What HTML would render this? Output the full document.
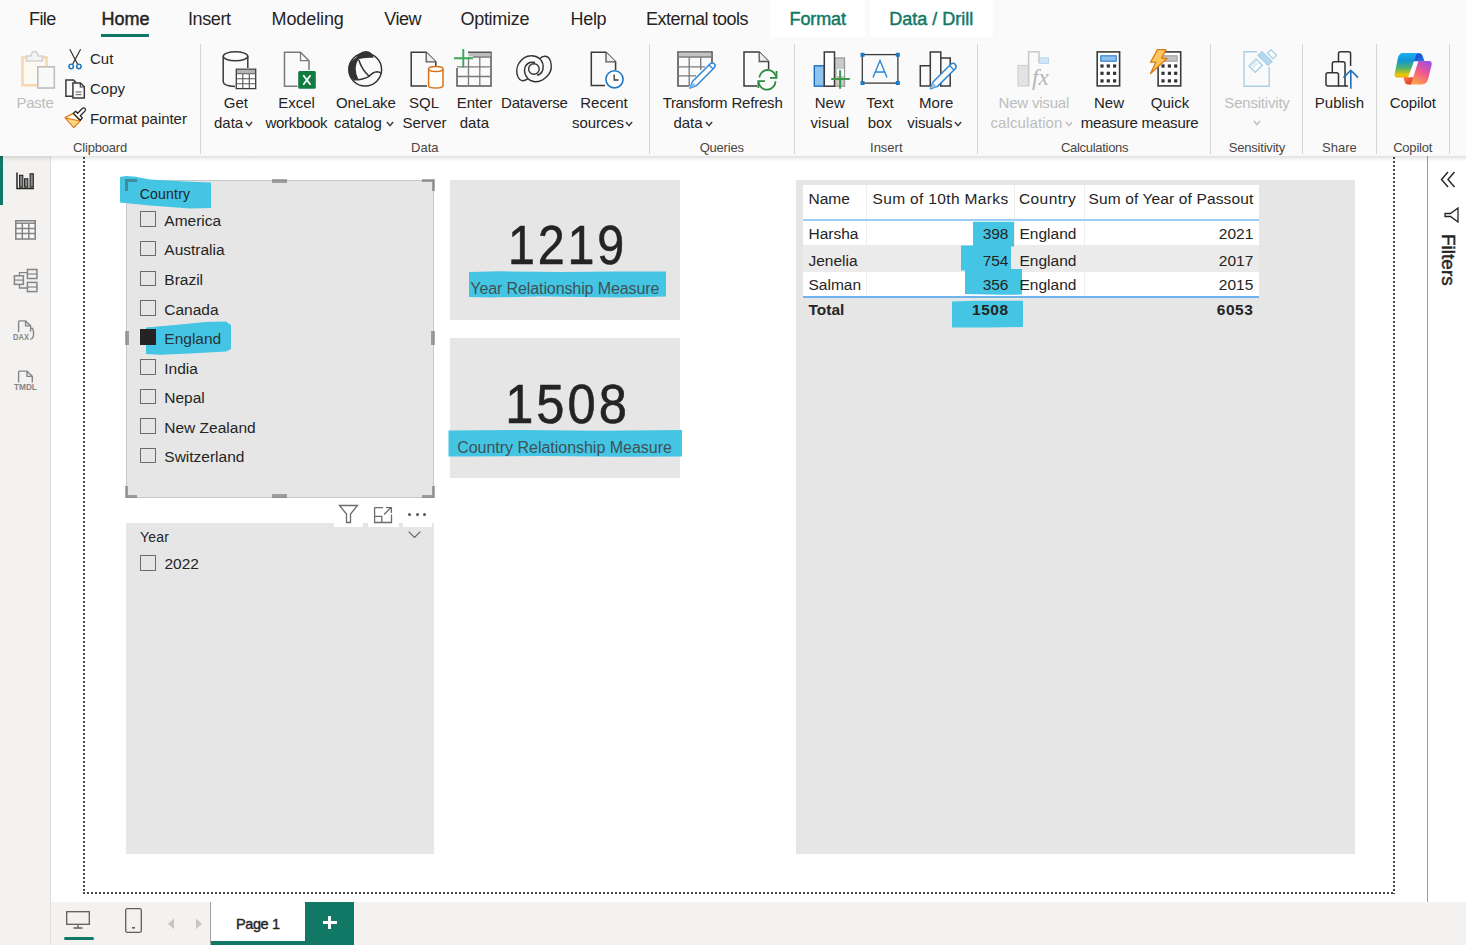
<!DOCTYPE html>
<html><head><meta charset="utf-8"><style>
html,body{margin:0;padding:0;}
body{width:1466px;height:945px;overflow:hidden;position:relative;background:#fff;font-family:"Liberation Sans",sans-serif;}
.t{position:absolute;white-space:nowrap;}
.r{position:absolute;display:block;}
</style></head><body>
<div class="r" style="left:0px;top:0px;width:1466px;height:156px;background:#fafafa;"></div>
<div class="r" style="left:770px;top:0px;width:95px;height:37px;background:#ffffff;"></div>
<div class="r" style="left:870px;top:0px;width:123px;height:37px;background:#ffffff;"></div>
<div class="r" style="left:51px;top:156px;width:1376px;height:746px;background:#ffffff;"></div>
<div class="r" style="left:0px;top:156px;width:50px;height:789px;background:#f3f2f1;"></div>
<div class="r" style="left:50px;top:156px;width:1px;height:789px;background:#e1dfdd;"></div>
<div class="r" style="left:0px;top:156px;width:3px;height:49px;background:#117865;"></div>
<div class="r" style="left:1427px;top:156px;width:1px;height:746px;background:#a19f9d;"></div>
<div class="r" style="left:1428px;top:156px;width:38px;height:746px;background:#ffffff;"></div>
<div class="r" style="left:51px;top:902px;width:1415px;height:43px;background:#f3f2f1;"></div>
<div class="r" style="left:0px;top:156px;width:1466px;height:6px;background:linear-gradient(rgba(0,0,0,0.12),rgba(0,0,0,0.03) 60%,rgba(0,0,0,0));z-index:5"></div>
<div class="r" style="left:101px;top:34px;width:48px;height:3px;background:#117865;"></div>
<div class="r" style="left:200px;top:44px;width:1px;height:110px;background:#d6d6d6;"></div>
<svg class="r" style="left:245.3px;top:121px;" width="8" height="6" viewBox="0 0 8 6"><path d="M0.9 1 L4.0 4.6 L7.1 1" fill="none" stroke="#3b3a39" stroke-width="1.4"/></svg>
<svg class="r" style="left:385.5px;top:121px;" width="8" height="6" viewBox="0 0 8 6"><path d="M0.9 1 L4.0 4.6 L7.1 1" fill="none" stroke="#3b3a39" stroke-width="1.4"/></svg>
<svg class="r" style="left:624.5px;top:121px;" width="8" height="6" viewBox="0 0 8 6"><path d="M0.9 1 L4.0 4.6 L7.1 1" fill="none" stroke="#3b3a39" stroke-width="1.4"/></svg>
<div class="r" style="left:649px;top:44px;width:1px;height:110px;background:#d6d6d6;"></div>
<svg class="r" style="left:705.3px;top:121px;" width="8" height="6" viewBox="0 0 8 6"><path d="M0.9 1 L4.0 4.6 L7.1 1" fill="none" stroke="#3b3a39" stroke-width="1.4"/></svg>
<div class="r" style="left:794px;top:44px;width:1px;height:110px;background:#d6d6d6;"></div>
<svg class="r" style="left:953.5px;top:121px;" width="8" height="6" viewBox="0 0 8 6"><path d="M0.9 1 L4.0 4.6 L7.1 1" fill="none" stroke="#3b3a39" stroke-width="1.4"/></svg>
<div class="r" style="left:977px;top:44px;width:1px;height:110px;background:#d6d6d6;"></div>
<svg class="r" style="left:1064.5px;top:121px;" width="8" height="6" viewBox="0 0 8 6"><path d="M0.9 1 L4.0 4.6 L7.1 1" fill="none" stroke="#bdbdbd" stroke-width="1.4"/></svg>
<div class="r" style="left:1210px;top:44px;width:1px;height:110px;background:#d6d6d6;"></div>
<svg class="r" style="left:1252.5px;top:120px;" width="8" height="6" viewBox="0 0 8 6"><path d="M0.9 1 L4.0 4.6 L7.1 1" fill="none" stroke="#bdbdbd" stroke-width="1.4"/></svg>
<div class="r" style="left:1302px;top:44px;width:1px;height:110px;background:#d6d6d6;"></div>
<div class="r" style="left:1376px;top:44px;width:1px;height:110px;background:#d6d6d6;"></div>
<div class="r" style="left:1449px;top:44px;width:1px;height:110px;background:#d6d6d6;"></div>
<div class="r" style="left:83px;top:157px;width:2px;height:737px;background:repeating-linear-gradient(180deg,#4a4a4a 0,#4a4a4a 2px,transparent 2px,transparent 4px);"></div>
<div class="r" style="left:1393px;top:157px;width:2px;height:737px;background:repeating-linear-gradient(180deg,#4a4a4a 0,#4a4a4a 2px,transparent 2px,transparent 4px);"></div>
<div class="r" style="left:83px;top:892px;width:1312px;height:2px;background:repeating-linear-gradient(90deg,#4a4a4a 0,#4a4a4a 2px,transparent 2px,transparent 4px);"></div>
<div class="r" style="left:126px;top:180px;width:308px;height:318px;background:#e6e6e6;box-sizing:border-box;border:1px solid #c8c8c8;"></div>
<div class="r" style="left:126px;top:523px;width:308px;height:331px;background:#e6e6e6;"></div>
<div class="r" style="left:450px;top:180px;width:230px;height:140px;background:#e6e6e6;"></div>
<div class="r" style="left:450px;top:338px;width:230px;height:140px;background:#e6e6e6;"></div>
<div class="r" style="left:796px;top:180px;width:559px;height:674px;background:#e6e6e6;"></div>
<div class="r" style="left:139.5px;top:211.4px;width:16.0px;height:15.5px;background:transparent;box-sizing:border-box;border:1px solid #6b6b6b;"></div>
<div class="r" style="left:139.5px;top:240.9px;width:16.0px;height:15.499999999999972px;background:transparent;box-sizing:border-box;border:1px solid #6b6b6b;"></div>
<div class="r" style="left:139.5px;top:270.5px;width:16.0px;height:15.5px;background:transparent;box-sizing:border-box;border:1px solid #6b6b6b;"></div>
<div class="r" style="left:139.5px;top:300.3px;width:16.0px;height:15.5px;background:transparent;box-sizing:border-box;border:1px solid #6b6b6b;"></div>
<div class="r" style="left:139.5px;top:359.3px;width:16.0px;height:15.5px;background:transparent;box-sizing:border-box;border:1px solid #6b6b6b;"></div>
<div class="r" style="left:139.5px;top:388.8px;width:16.0px;height:15.5px;background:transparent;box-sizing:border-box;border:1px solid #6b6b6b;"></div>
<div class="r" style="left:139.5px;top:418.4px;width:16.0px;height:15.5px;background:transparent;box-sizing:border-box;border:1px solid #6b6b6b;"></div>
<div class="r" style="left:139.5px;top:447.9px;width:16.0px;height:15.5px;background:transparent;box-sizing:border-box;border:1px solid #6b6b6b;"></div>
<svg class="r" style="left:408px;top:531px;" width="13" height="8" viewBox="0 0 13 8"><path d="M0.7 0.7 L6.5 6.5 L12.3 0.7" fill="none" stroke="#605e5c" stroke-width="1.1"/></svg>
<div class="r" style="left:139.5px;top:555px;width:16.0px;height:15.5px;background:transparent;box-sizing:border-box;border:1px solid #6b6b6b;"></div>
<div class="r" style="left:334px;top:503px;width:29px;height:24px;background:#ffffff;"></div>
<div class="r" style="left:368px;top:503px;width:30.5px;height:24px;background:#ffffff;"></div>
<div class="r" style="left:403px;top:503px;width:29px;height:24px;background:#ffffff;"></div>
<svg class="r" style="left:338px;top:504px;" width="21" height="20" viewBox="0 0 21 20"><path d="M1.5 1.5 L19.5 1.5 L12.5 10 L12.5 18.5 L8.5 18.5 L8.5 10 Z" fill="none" stroke="#6b6b6b" stroke-width="1.3" stroke-linejoin="miter"/></svg>
<svg class="r" style="left:373px;top:506px;" width="20" height="18" viewBox="0 0 20 18"><path d="M1.6 1.6 H10 M1.6 1.6 V16.5 H18.5 V8.5 M1.6 10.3 H8.8 V16.5 M11 8.5 L18 1.6 M13 1.6 H18.4 V7" fill="none" stroke="#6b6b6b" stroke-width="1.3"/></svg>
<div class="r" style="left:408.0px;top:512.5px;width:3px;height:3px;border-radius:50%;background:#555"></div>
<div class="r" style="left:415.5px;top:512.5px;width:3px;height:3px;border-radius:50%;background:#555"></div>
<div class="r" style="left:423.0px;top:512.5px;width:3px;height:3px;border-radius:50%;background:#555"></div>
<div class="r" style="left:803px;top:185px;width:456px;height:34px;background:#ffffff;"></div>
<div class="r" style="left:803px;top:219px;width:456px;height:2px;background:#9ccbf3;"></div>
<div class="r" style="left:803px;top:221px;width:456px;height:24px;background:#ffffff;"></div>
<div class="r" style="left:803px;top:245px;width:456px;height:27px;background:#ebebeb;"></div>
<div class="r" style="left:803px;top:272px;width:456px;height:24px;background:#ffffff;"></div>
<div class="r" style="left:803px;top:296px;width:456px;height:2px;background:#6fb3ee;"></div>
<div class="r" style="left:866px;top:185px;width:1px;height:34px;background:#eeeeee;"></div>
<div class="r" style="left:866px;top:221px;width:1px;height:24px;background:#eeeeee;"></div>
<div class="r" style="left:866px;top:272px;width:1px;height:24px;background:#eeeeee;"></div>
<div class="r" style="left:1014px;top:185px;width:1px;height:34px;background:#eeeeee;"></div>
<div class="r" style="left:1014px;top:221px;width:1px;height:24px;background:#eeeeee;"></div>
<div class="r" style="left:1014px;top:272px;width:1px;height:24px;background:#eeeeee;"></div>
<div class="r" style="left:1084px;top:185px;width:1px;height:34px;background:#eeeeee;"></div>
<div class="r" style="left:1084px;top:221px;width:1px;height:24px;background:#eeeeee;"></div>
<div class="r" style="left:1084px;top:272px;width:1px;height:24px;background:#eeeeee;"></div>
<svg class="r" style="left:1440px;top:171px;" width="16" height="17" viewBox="0 0 16 17"><path d="M8 1 L1.5 8.5 L8 16 M14.5 1 L8 8.5 L14.5 16" fill="none" stroke="#252423" stroke-width="1.4"/></svg>
<svg class="r" style="left:1444px;top:207px;" width="15" height="16" viewBox="0 0 15 16"><path d="M14 1 L14 15 L6.5 9.5 L1 9.5 L1 6.5 L6.5 6.5 Z" fill="none" stroke="#252423" stroke-width="1.3" stroke-linejoin="miter"/></svg>
<div class="t" style="left:1439px;top:234px;font-size:19px;line-height:19px;font-weight:400;color:#252423;writing-mode:vertical-rl;letter-spacing:0px;-webkit-text-stroke:0.45px #252423;">Filters</div>
<div class="r" style="left:210px;top:902px;width:1px;height:43px;background:#a19f9d;"></div>
<div class="r" style="left:211px;top:902px;width:94px;height:43px;background:#ffffff;"></div>
<div class="r" style="left:211px;top:941px;width:94px;height:4px;background:#117865;"></div>
<div class="r" style="left:305px;top:902px;width:49px;height:43px;background:#117865;"></div>
<div class="r" style="left:322.5px;top:920.5px;width:14.0px;height:3.0px;background:#ffffff;"></div>
<div class="r" style="left:328px;top:915.5px;width:3px;height:13.5px;background:#ffffff;"></div>
<svg class="r" style="left:66px;top:911px;" width="24" height="18" viewBox="0 0 24 18"><rect x="0.7" y="0.7" width="22.6" height="12.6" fill="none" stroke="#605e5c" stroke-width="1.3"/><path d="M12 13.5 V16.5 M7.5 17 H16.5" stroke="#605e5c" stroke-width="1.3"/></svg>
<div class="r" style="left:64px;top:937px;width:30px;height:3px;background:#117865;border-radius:1.5px;"></div>
<svg class="r" style="left:125px;top:908px;" width="17" height="25" viewBox="0 0 17 25"><rect x="0.7" y="0.7" width="15.6" height="23.6" rx="1.5" fill="none" stroke="#605e5c" stroke-width="1.3"/><rect x="7" y="19" width="3" height="1.6" fill="#605e5c"/></svg>
<svg class="r" style="left:167px;top:917.5px;" width="8" height="12" viewBox="0 0 8 12"><path d="M7 0.5 L1 5.8 L7 11.2 Z" fill="#c8c6c4"/></svg>
<svg class="r" style="left:195px;top:917.5px;" width="8" height="12" viewBox="0 0 8 12"><path d="M1 0.5 L7 5.8 L1 11.2 Z" fill="#c8c6c4"/></svg>
<svg class="r" style="left:15px;top:171px;overflow:visible" width="21" height="20" viewBox="0 0 21 20"><path d="M2 1.5 V17.5 H19" fill="none" stroke="#252423" stroke-width="1.5"/><rect x="4.6" y="4.3" width="3.2" height="11.8" fill="#8a8a8a" stroke="#252423" stroke-width="1.1"/><rect x="9.6" y="7.8" width="3.2" height="8.3" fill="#8a8a8a" stroke="#252423" stroke-width="1.1"/><rect x="15.1" y="2.8" width="3.2" height="13.3" fill="#8a8a8a" stroke="#252423" stroke-width="1.1"/></svg>
<svg class="r" style="left:14px;top:219px;" width="23" height="22" viewBox="0 0 23 22"><rect x="1.8" y="1.8" width="19.4" height="18.2" fill="#f7f7f7" stroke="#858585" stroke-width="1.6"/><path d="M1.8 4.2 H21.2 M1.8 9.4 H21.2 M1.8 14.6 H21.2 M8.3 4.2 V20 M14.8 4.2 V20" stroke="#858585" stroke-width="1.5"/></svg>
<svg class="r" style="left:13px;top:268px;" width="25" height="25" viewBox="0 0 25 25"><rect x="1.4" y="7.8" width="9" height="8.6" fill="none" stroke="#858585" stroke-width="1.5"/><path d="M1.4 12.1 H10.4" stroke="#858585" stroke-width="1.2"/><rect x="14.4" y="1.5" width="9.5" height="9" fill="none" stroke="#858585" stroke-width="1.5"/><path d="M14.4 6 H23.9" stroke="#858585" stroke-width="1.2"/><rect x="14.4" y="14.4" width="9.5" height="9.2" fill="none" stroke="#858585" stroke-width="1.5"/><path d="M14.4 19 H23.9" stroke="#858585" stroke-width="1.2"/><path d="M6.5 7.8 V4.6 H14.4 M6.5 16.4 V20 H14.4" fill="none" stroke="#858585" stroke-width="1.3"/></svg>
<svg class="r" style="left:0;top:0" width="1466" height="945" viewBox="0 0 1466 945"><path d="M120,177 L126,176 L134,176.5 L150,179.5 L185,181.5 L211,182.5 L211,208 L190,208.5 L150,205.5 L125,203 L120,202.5 Z" fill="#44c5e4"/><path d="M146,327.5 L175,325 L205,322 L226,321.5 L231,325 L231,349 L226,351.5 L190,353.5 L160,354.8 L146,354 Z" fill="#44c5e4"/><path d="M469,272 L500,271.3 L560,272 L620,271.5 L666,271.5 L666,296.5 L620,297.5 L540,296.5 L490,297.5 L469,297 Z" fill="#44c5e4"/><path d="M448.5,430.5 L520,430 L600,430.8 L682,430 L682,456.5 L620,456.8 L540,456 L470,456.5 L448.5,456.5 Z" fill="#44c5e4"/><path d="M973,221.7 L1014,221.7 L1014,246.5 L973,246.5 Z" fill="#44c5e4"/><path d="M961,245.5 L1011,245.5 L1011,270.5 L961,270.5 Z" fill="#44c5e4"/><path d="M965,269 L1022,269 L1022,294.6 L1000,294.8 L965,294 Z" fill="#44c5e4"/><path d="M952,301.5 L975,300.8 L1023,300.8 L1023,327 L990,327.6 L952,327.6 Z" fill="#44c5e4"/></svg>
<svg class="r" style="left:0;top:0" width="1466" height="945" viewBox="0 0 1466 945"><path d="M125,179 L137,179 L137,182 L128,182 L128,191 L125,191 Z M422,179 L435,179 L435,191 L432,191 L432,182 L422,182 Z M125,486 L128,486 L128,495 L137,495 L137,498 L125,498 Z M432,486 L435,486 L435,498 L422,498 L422,495 L432,495 Z M272,179 L287,179 L287,183 L272,183 Z M272,494 L287,494 L287,498 L272,498 Z M125,331 L129,331 L129,345 L125,345 Z M431,331 L435,331 L435,345 L431,345 Z " fill="rgba(60,60,60,0.42)"/></svg>
<div class="t" style="top:9.76px;font-size:18px;line-height:18px;color:#252423;font-weight:400;letter-spacing:-0.6px;left:29.00px;">File</div>
<div class="t" style="top:9.76px;font-size:18px;line-height:18px;color:#252423;font-weight:400;left:101.50px;-webkit-text-stroke:0.45px #252423;">Home</div>
<div class="t" style="top:9.76px;font-size:18px;line-height:18px;color:#252423;font-weight:400;letter-spacing:-0.4px;left:188.00px;">Insert</div>
<div class="t" style="top:9.76px;font-size:18px;line-height:18px;color:#252423;font-weight:400;letter-spacing:-0.1px;left:271.50px;">Modeling</div>
<div class="t" style="top:9.76px;font-size:18px;line-height:18px;color:#252423;font-weight:400;letter-spacing:-0.5px;left:384.30px;">View</div>
<div class="t" style="top:9.76px;font-size:18px;line-height:18px;color:#252423;font-weight:400;letter-spacing:-0.3px;left:460.50px;">Optimize</div>
<div class="t" style="top:9.76px;font-size:18px;line-height:18px;color:#252423;font-weight:400;letter-spacing:-0.3px;left:570.50px;">Help</div>
<div class="t" style="top:9.76px;font-size:18px;line-height:18px;color:#252423;font-weight:400;letter-spacing:-0.5px;left:646.00px;">External tools</div>
<div class="t" style="top:9.76px;font-size:18px;line-height:18px;color:#117865;font-weight:400;letter-spacing:-0.1px;left:789.50px;-webkit-text-stroke:0.45px #117865;">Format</div>
<div class="t" style="top:9.76px;font-size:18px;line-height:18px;color:#117865;font-weight:400;left:889.30px;-webkit-text-stroke:0.45px #117865;">Data / Drill</div>
<div class="t" style="top:94.80px;font-size:15px;line-height:15px;color:#bdbdbd;font-weight:400;letter-spacing:-0.3px;left:-265.00px;width:600px;text-align:center;">Paste</div>
<div class="t" style="top:50.90px;font-size:15px;line-height:15px;color:#252423;font-weight:400;left:90.00px;">Cut</div>
<div class="t" style="top:80.50px;font-size:15px;line-height:15px;color:#252423;font-weight:400;left:90.00px;">Copy</div>
<div class="t" style="top:111.10px;font-size:15px;line-height:15px;color:#252423;font-weight:400;letter-spacing:-0.05px;left:90.00px;">Format painter</div>
<div class="t" style="top:140.50px;font-size:13px;line-height:13px;color:#484644;font-weight:400;letter-spacing:-0.2px;left:-200.00px;width:600px;text-align:center;">Clipboard</div>
<div class="t" style="top:94.80px;font-size:15px;line-height:15px;color:#252423;font-weight:400;left:-64.20px;width:600px;text-align:center;">Get</div>
<div class="t" style="top:114.80px;font-size:15px;line-height:15px;color:#252423;font-weight:400;left:214.00px;">data</div>
<div class="t" style="top:94.80px;font-size:15px;line-height:15px;color:#252423;font-weight:400;left:-3.50px;width:600px;text-align:center;">Excel</div>
<div class="t" style="top:114.80px;font-size:15px;line-height:15px;color:#252423;font-weight:400;letter-spacing:-0.3px;left:-3.70px;width:600px;text-align:center;">workbook</div>
<div class="t" style="top:94.80px;font-size:15px;line-height:15px;color:#252423;font-weight:400;letter-spacing:-0.2px;left:65.80px;width:600px;text-align:center;">OneLake</div>
<div class="t" style="top:114.80px;font-size:15px;line-height:15px;color:#252423;font-weight:400;letter-spacing:-0.1px;left:334.00px;">catalog</div>
<div class="t" style="top:94.80px;font-size:15px;line-height:15px;color:#252423;font-weight:400;left:124.00px;width:600px;text-align:center;">SQL</div>
<div class="t" style="top:114.80px;font-size:15px;line-height:15px;color:#252423;font-weight:400;left:124.50px;width:600px;text-align:center;">Server</div>
<div class="t" style="top:94.80px;font-size:15px;line-height:15px;color:#252423;font-weight:400;left:174.70px;width:600px;text-align:center;">Enter</div>
<div class="t" style="top:114.80px;font-size:15px;line-height:15px;color:#252423;font-weight:400;left:174.40px;width:600px;text-align:center;">data</div>
<div class="t" style="top:94.80px;font-size:15px;line-height:15px;color:#252423;font-weight:400;letter-spacing:-0.2px;left:234.40px;width:600px;text-align:center;">Dataverse</div>
<div class="t" style="top:94.80px;font-size:15px;line-height:15px;color:#252423;font-weight:400;left:304.00px;width:600px;text-align:center;">Recent</div>
<div class="t" style="top:114.80px;font-size:15px;line-height:15px;color:#252423;font-weight:400;letter-spacing:-0.1px;left:572.00px;">sources</div>
<div class="t" style="top:140.50px;font-size:13px;line-height:13px;color:#484644;font-weight:400;left:124.80px;width:600px;text-align:center;">Data</div>
<div class="t" style="top:94.80px;font-size:15px;line-height:15px;color:#252423;font-weight:400;letter-spacing:-0.4px;left:394.90px;width:600px;text-align:center;">Transform</div>
<div class="t" style="top:114.80px;font-size:15px;line-height:15px;color:#252423;font-weight:400;left:673.40px;">data</div>
<div class="t" style="top:94.80px;font-size:15px;line-height:15px;color:#252423;font-weight:400;letter-spacing:-0.2px;left:457.00px;width:600px;text-align:center;">Refresh</div>
<div class="t" style="top:140.50px;font-size:13px;line-height:13px;color:#484644;font-weight:400;letter-spacing:-0.2px;left:421.70px;width:600px;text-align:center;">Queries</div>
<div class="t" style="top:94.80px;font-size:15px;line-height:15px;color:#252423;font-weight:400;left:529.80px;width:600px;text-align:center;">New</div>
<div class="t" style="top:114.80px;font-size:15px;line-height:15px;color:#252423;font-weight:400;left:529.80px;width:600px;text-align:center;">visual</div>
<div class="t" style="top:94.80px;font-size:15px;line-height:15px;color:#252423;font-weight:400;left:580.00px;width:600px;text-align:center;">Text</div>
<div class="t" style="top:114.80px;font-size:15px;line-height:15px;color:#252423;font-weight:400;left:579.80px;width:600px;text-align:center;">box</div>
<div class="t" style="top:94.80px;font-size:15px;line-height:15px;color:#252423;font-weight:400;left:636.20px;width:600px;text-align:center;">More</div>
<div class="t" style="top:114.80px;font-size:15px;line-height:15px;color:#252423;font-weight:400;letter-spacing:-0.1px;left:907.30px;">visuals</div>
<div class="t" style="top:140.50px;font-size:13px;line-height:13px;color:#484644;font-weight:400;left:586.30px;width:600px;text-align:center;">Insert</div>
<div class="t" style="top:94.80px;font-size:15px;line-height:15px;color:#bdbdbd;font-weight:400;letter-spacing:-0.2px;left:733.80px;width:600px;text-align:center;">New visual</div>
<div class="t" style="top:114.80px;font-size:15px;line-height:15px;color:#bdbdbd;font-weight:400;letter-spacing:0.1px;left:990.50px;">calculation</div>
<div class="t" style="top:94.80px;font-size:15px;line-height:15px;color:#252423;font-weight:400;left:809.00px;width:600px;text-align:center;">New</div>
<div class="t" style="top:114.80px;font-size:15px;line-height:15px;color:#252423;font-weight:400;letter-spacing:-0.2px;left:809.20px;width:600px;text-align:center;">measure</div>
<div class="t" style="top:94.80px;font-size:15px;line-height:15px;color:#252423;font-weight:400;left:870.00px;width:600px;text-align:center;">Quick</div>
<div class="t" style="top:114.80px;font-size:15px;line-height:15px;color:#252423;font-weight:400;letter-spacing:-0.2px;left:870.00px;width:600px;text-align:center;">measure</div>
<div class="t" style="top:140.50px;font-size:13px;line-height:13px;color:#484644;font-weight:400;letter-spacing:-0.3px;left:794.60px;width:600px;text-align:center;">Calculations</div>
<div class="t" style="top:94.80px;font-size:15px;line-height:15px;color:#bdbdbd;font-weight:400;letter-spacing:-0.2px;left:957.00px;width:600px;text-align:center;">Sensitivity</div>
<div class="t" style="top:140.50px;font-size:13px;line-height:13px;color:#484644;font-weight:400;letter-spacing:-0.2px;left:956.90px;width:600px;text-align:center;">Sensitivity</div>
<div class="t" style="top:94.80px;font-size:15px;line-height:15px;color:#252423;font-weight:400;left:1039.40px;width:600px;text-align:center;">Publish</div>
<div class="t" style="top:140.50px;font-size:13px;line-height:13px;color:#484644;font-weight:400;left:1039.40px;width:600px;text-align:center;">Share</div>
<div class="t" style="top:94.80px;font-size:15px;line-height:15px;color:#252423;font-weight:400;letter-spacing:-0.1px;left:1112.80px;width:600px;text-align:center;">Copilot</div>
<div class="t" style="top:140.50px;font-size:13px;line-height:13px;color:#484644;font-weight:400;letter-spacing:-0.2px;left:1112.70px;width:600px;text-align:center;">Copilot</div>
<div class="t" style="top:187.15px;font-size:14px;line-height:14px;color:#252423;font-weight:400;left:139.80px;letter-spacing:0.2px;">Country</div>
<div class="t" style="top:212.78px;font-size:15.5px;line-height:15.5px;color:#252423;font-weight:400;left:164.30px;">America</div>
<div class="t" style="top:242.28px;font-size:15.5px;line-height:15.5px;color:#252423;font-weight:400;left:164.30px;">Australia</div>
<div class="t" style="top:271.88px;font-size:15.5px;line-height:15.5px;color:#252423;font-weight:400;left:164.30px;">Brazil</div>
<div class="t" style="top:301.68px;font-size:15.5px;line-height:15.5px;color:#252423;font-weight:400;left:164.30px;">Canada</div>
<div class="r" style="left:139.5px;top:329.4px;width:16px;height:15.5px;background:#252423"></div>
<div class="t" style="top:330.78px;font-size:15.5px;line-height:15.5px;color:#2a3436;font-weight:400;left:164.30px;">England</div>
<div class="t" style="top:360.68px;font-size:15.5px;line-height:15.5px;color:#252423;font-weight:400;left:164.30px;">India</div>
<div class="t" style="top:390.18px;font-size:15.5px;line-height:15.5px;color:#252423;font-weight:400;left:164.30px;">Nepal</div>
<div class="t" style="top:419.78px;font-size:15.5px;line-height:15.5px;color:#252423;font-weight:400;left:164.30px;">New Zealand</div>
<div class="t" style="top:449.28px;font-size:15.5px;line-height:15.5px;color:#252423;font-weight:400;left:164.30px;">Switzerland</div>
<div class="t" style="top:530.15px;font-size:14px;line-height:14px;color:#252423;font-weight:400;left:140.00px;letter-spacing:0.2px;">Year</div>
<div class="t" style="top:555.88px;font-size:15.5px;line-height:15.5px;color:#252423;font-weight:400;left:164.50px;">2022</div>
<div class="t" style="left:450px;top:218.44px;width:232px;font-size:55px;line-height:55px;color:#252423;text-align:center;letter-spacing:3.2px;text-indent:3.2px;transform:scaleX(0.88);transform-origin:50% 0;-webkit-text-stroke:0.6px #252423;">1219</div>
<div class="t" style="top:280.96px;font-size:16px;line-height:16px;color:#3e5256;font-weight:400;letter-spacing:-0.1px;left:264.80px;width:600px;text-align:center;">Year Relationship Measure</div>
<div class="t" style="left:450px;top:377.44px;width:232px;font-size:55px;line-height:55px;color:#252423;text-align:center;letter-spacing:3.3px;text-indent:3.3px;transform:scaleX(0.92);transform-origin:50% 0;-webkit-text-stroke:0.6px #252423;">1508</div>
<div class="t" style="top:440.46px;font-size:16px;line-height:16px;color:#3e5256;font-weight:400;letter-spacing:-0.02px;left:264.50px;width:600px;text-align:center;">Country Relationship Measure</div>
<div class="t" style="top:190.88px;font-size:15.5px;line-height:15.5px;color:#252423;font-weight:400;left:808.50px;">Name</div>
<div class="t" style="top:190.88px;font-size:15.5px;line-height:15.5px;color:#252423;font-weight:400;letter-spacing:0.35px;left:872.50px;">Sum of 10th Marks</div>
<div class="t" style="top:190.88px;font-size:15.5px;line-height:15.5px;color:#252423;font-weight:400;letter-spacing:0.4px;left:1019.00px;">Country</div>
<div class="t" style="top:190.88px;font-size:15.5px;line-height:15.5px;color:#252423;font-weight:400;letter-spacing:0.13px;left:1088.50px;">Sum of Year of Passout</div>
<div class="t" style="top:225.68px;font-size:15.5px;line-height:15.5px;color:#252423;font-weight:400;left:808.50px;">Harsha</div>
<div class="t" style="top:225.68px;font-size:15.5px;line-height:15.5px;color:#252423;font-weight:400;left:408.50px;width:600px;text-align:right;">398</div>
<div class="t" style="top:225.68px;font-size:15.5px;line-height:15.5px;color:#252423;font-weight:400;left:1019.50px;">England</div>
<div class="t" style="top:225.68px;font-size:15.5px;line-height:15.5px;color:#252423;font-weight:400;left:653.30px;width:600px;text-align:right;">2021</div>
<div class="t" style="top:252.58px;font-size:15.5px;line-height:15.5px;color:#252423;font-weight:400;left:808.50px;">Jenelia</div>
<div class="t" style="top:252.58px;font-size:15.5px;line-height:15.5px;color:#252423;font-weight:400;left:408.50px;width:600px;text-align:right;">754</div>
<div class="t" style="top:252.58px;font-size:15.5px;line-height:15.5px;color:#252423;font-weight:400;left:1019.50px;">England</div>
<div class="t" style="top:252.58px;font-size:15.5px;line-height:15.5px;color:#252423;font-weight:400;left:653.30px;width:600px;text-align:right;">2017</div>
<div class="t" style="top:277.38px;font-size:15.5px;line-height:15.5px;color:#252423;font-weight:400;left:808.50px;">Salman</div>
<div class="t" style="top:277.38px;font-size:15.5px;line-height:15.5px;color:#252423;font-weight:400;left:408.50px;width:600px;text-align:right;">356</div>
<div class="t" style="top:277.38px;font-size:15.5px;line-height:15.5px;color:#252423;font-weight:400;left:1019.50px;">England</div>
<div class="t" style="top:277.38px;font-size:15.5px;line-height:15.5px;color:#252423;font-weight:400;left:653.30px;width:600px;text-align:right;">2015</div>
<div class="t" style="top:302.08px;font-size:15.5px;line-height:15.5px;color:#252423;font-weight:700;left:808.50px;">Total</div>
<div class="t" style="top:302.08px;font-size:15.5px;line-height:15.5px;color:#252423;font-weight:700;letter-spacing:0.5px;left:408.50px;width:600px;text-align:right;">1508</div>
<div class="t" style="top:302.08px;font-size:15.5px;line-height:15.5px;color:#252423;font-weight:700;letter-spacing:0.5px;left:653.30px;width:600px;text-align:right;">6053</div>
<div class="t" style="top:917.33px;font-size:14.5px;line-height:14.5px;color:#252423;font-weight:400;letter-spacing:-0.35px;left:-42.20px;width:600px;text-align:center;-webkit-text-stroke:0.4px #252423;">Page 1</div>
<svg class="r" style="left:0;top:300px" width="50" height="100" viewBox="0 300 50 100"><g fill="none" stroke="#858585" stroke-width="1.4"><path d="M18.6 332 V322 Q18.6 320.9 19.7 320.9 H25.6 L30.6 325.9 V331.5 M25.6 320.9 V325.9 H30.6 M31.6 328 Q33.6 329 33.6 333.5 Q33.6 338.6 30.3 339.4"/><path d="M18.6 382.4 V372.2 Q18.6 371.1 19.7 371.1 H27 L32.3 376.4 V382.4 M27 371.1 V376.4 H32.3"/></g><g fill="#858585" font-family="Liberation Sans" font-weight="700"><text x="13.1" y="340.4" font-size="8.4" textLength="15.9" lengthAdjust="spacingAndGlyphs">DAX</text><text x="14" y="390.2" font-size="8.6" textLength="22.9" lengthAdjust="spacingAndGlyphs">TMDL</text></g></svg>
<svg class="r" style="left:0;top:0" width="1466" height="160" viewBox="0 0 1466 160"><rect x="22.5" y="57.3" width="24" height="28" fill="#fdfaf4" stroke="#f6d9b2" stroke-width="2.6"/><path d="M26.5 61 V56 H31 Q31.5 51.5 34.5 51.5 Q37.5 51.5 38 56 H42.5 V61 Z" fill="#f4f4f4" stroke="#d2d2d2" stroke-width="1.6"/><rect x="37.8" y="66.8" width="16.5" height="21.2" fill="#f9f9f9" stroke="#bdbdbd" stroke-width="1.6"/><path d="M69.8 49.3 L77.6 64.3 M80.6 49.3 L72.6 64.3" stroke="#333" stroke-width="1.2" fill="none"/><circle cx="71.2" cy="66.5" r="2.2" fill="#fff" stroke="#1f78c1" stroke-width="1.5"/><circle cx="78.9" cy="66.5" r="2.2" fill="#fff" stroke="#1f78c1" stroke-width="1.5"/><path d="M75.5 96.2 H65.9 V79.9 H73.5 L76 82.5" fill="#fafafa" stroke="#3b3a39" stroke-width="1.5"/><path d="M72.9 83 H80.5 L84.3 86.8 V98 H72.9 Z" fill="#fafafa" stroke="#3b3a39" stroke-width="1.5" stroke-linejoin="miter"/><path d="M80.3 83 V87 H84.3" fill="none" stroke="#3b3a39" stroke-width="1.2"/><path d="M75.6 92 H81.5 M75.6 94.7 H81.5" stroke="#555" stroke-width="1"/><path d="M65.1 117.6 L73.3 113.4 L80.3 120.7 L73.65 127.4 Z" fill="#fff" stroke="#e07b14" stroke-width="1.4" stroke-linejoin="round"/><path d="M67 118.4 L79 120.9 L73.7 126.2 Z" fill="#f9d77e"/><path d="M65.5 117.8 L79.8 121" stroke="#e07b14" stroke-width="1.2"/><path d="M73.3 113.4 L75.6 111.2 L77.6 113.2 L82.3 108.5 Q83.8 107.2 85 108.4 Q86.2 109.7 84.9 111.1 L80.3 115.8 L82.4 117.9 L80.3 120.2 Z" fill="#fff" stroke="#252423" stroke-width="1.3" stroke-linejoin="round"/><path d="M223.2 56.3 V81.5 Q223.2 86 235 86.5" fill="none" stroke="#3b3a39" stroke-width="1.5"/><path d="M247.8 56.3 V68" fill="none" stroke="#3b3a39" stroke-width="1.5"/><ellipse cx="235.5" cy="56.3" rx="12.3" ry="4.5" fill="#fafafa" stroke="#3b3a39" stroke-width="1.5"/><rect x="236.3" y="69.2" width="19.4" height="19.4" fill="#fff" stroke="#3b3a39" stroke-width="1.3"/><rect x="237" y="69.9" width="18" height="3.6" fill="#b3b3b3"/><path d="M236.3 73.8 H255.7 M236.3 78.8 H255.7 M236.3 83.7 H255.7 M242.8 73.8 V88.6 M249.3 73.8 V88.6" stroke="#555" stroke-width="1.1"/><path d="M297.5 86.2 H284.5 V52.2 H300.5 L309 60.7 V70" fill="none" stroke="#7a7a7a" stroke-width="1.5"/><path d="M300.5 52.2 V60.7 H309" fill="none" stroke="#7a7a7a" stroke-width="1.3"/><rect x="298.2" y="71" width="17.6" height="17.8" rx="1.5" fill="#107c41"/><path d="M303.3 75.3 L310.5 84.7 M310.5 75.3 L303.3 84.7" stroke="#fff" stroke-width="1.8"/><circle cx="365.2" cy="69.6" r="16.4" fill="none" stroke="#333" stroke-width="1.5"/><path d="M373.5 57.8 Q372 51.2 366 51.1 Q360 51.3 356 57.8 Q348.3 62 348.4 69.5 Q348.8 76 353.5 79.8 L358.5 79.3 Q355.6 74 355.7 69 Q356 62 359 59.3 Q363 57.2 373.5 57.8 Z" fill="#333"/><path d="M358.8 60 Q362 70 369.2 76.3 M353.5 79.8 Q362 80.2 369.2 76.3 Q373 72 377 71.8 Q379.5 71.8 381.2 73.5" fill="none" stroke="#333" stroke-width="1.5"/><path d="M427 86 H411.2 V52.2 H426.2 L435.8 61.8 V66" fill="none" stroke="#3b3a39" stroke-width="1.5"/><path d="M426.2 52.2 V61.8 H435.8" fill="#eee" stroke="#555" stroke-width="1.3"/><path d="M428.6 69 V85.5 Q428.6 88 435.8 88 Q443 88 443 85.5 V69" fill="#fff" stroke="#d9731a" stroke-width="1.5"/><ellipse cx="435.8" cy="69" rx="7.2" ry="2.5" fill="#fff" stroke="#d9731a" stroke-width="1.5"/><path d="M457 68 V86 H491 V52.2 H468" fill="none" stroke="#555" stroke-width="1.5"/><rect x="468.5" y="53" width="22" height="3.5" fill="#bdbdbd"/><path d="M457 66.8 H491 M457 76.5 H491 M468.5 57 V86 M479.8 57 V86 M473 57 H491" stroke="#7a7a7a" stroke-width="1.3"/><path d="M454 58.2 H473 M463.3 48.9 V67.5" stroke="#3aa757" stroke-width="1.9"/><path d="M528 78.6 Q521 83.5 518 77 Q515 70 519 63 Q524 55.8 531 55.7 Q536 55.5 539.8 58.8 Q544 63 543 69 Q542 74 537 75.3" fill="none" stroke="#333" stroke-width="1.4"/><path d="M539.8 58.8 Q542 56 545.5 56.3 Q550.5 57 551.2 65 Q552 72 546.3 77 Q541 82 535 81.8 Q530 81 528 78.6 Q524 74 524.6 69 Q525.5 64 530 62.5 Q533 62 535 62.5" fill="none" stroke="#333" stroke-width="1.4"/><circle cx="533.9" cy="69" r="5.3" fill="none" stroke="#333" stroke-width="1.4"/><path d="M605 85.5 H591.3 V52.2 H606 L615.6 61.8 V70" fill="none" stroke="#3b3a39" stroke-width="1.5"/><path d="M606 52.2 V61.8 H615.6" fill="#eee" stroke="#555" stroke-width="1.3"/><circle cx="614.5" cy="79.3" r="8.6" fill="#fff" stroke="#1f78c1" stroke-width="1.6"/><path d="M614.2 74.5 V80 H618.5" fill="none" stroke="#333" stroke-width="1.3"/><path d="M689 86 H678 V52 H712 V63" fill="none" stroke="#555" stroke-width="1.6"/><rect x="678.8" y="52.8" width="32.4" height="3.8" fill="#c4c4c4"/><path d="M678 57 H712 M678 66.9 H705 M678 75.9 H696 M689.2 57 V86 M700.7 57 V70" stroke="#7a7a7a" stroke-width="1.3"/><path d="M690 88 L692.5 81.5 L710 64 Q712.5 62 714.5 64 Q716 66 714 68 L696.5 85.5 Z" fill="#fff" stroke="#2a86d4" stroke-width="1.5" stroke-linejoin="round"/><path d="M690 88 L692.3 82 L696 85.6 Z" fill="#8cc2ee"/><path d="M709 65 L713.2 69" stroke="#2a86d4" stroke-width="1.3"/><path d="M757 86 H744 V52 H759.2 L768.6 61.5 V69" fill="none" stroke="#3b3a39" stroke-width="1.5"/><path d="M759.2 52 V61.5 H768.6" fill="#eee" stroke="#555" stroke-width="1.3"/><path d="M759.3 77.5 A8.5 8.5 0 0 1 776 76.5 M775.5 81.2 A8.5 8.5 0 0 1 758.6 82.5" fill="none" stroke="#2e8b3e" stroke-width="1.8"/><path d="M776.5 71 V77.8 H770" fill="none" stroke="#2e8b3e" stroke-width="1.8"/><path d="M758.3 88 V81.2 H765" fill="none" stroke="#2e8b3e" stroke-width="1.8"/><rect x="814.3" y="65.8" width="10" height="20.4" fill="#8fc4ef" stroke="#1c6fc0" stroke-width="1.4"/><rect x="834.5" y="58" width="10" height="28.2" fill="#c9c9c9" stroke="#9a9a9a" stroke-width="1.3"/><rect x="824.3" y="52" width="10.2" height="34.2" fill="#fff" stroke="#3b3a39" stroke-width="1.5"/><rect x="837" y="69" width="7" height="7" fill="#f9f9f9"/><path d="M831.2 79.1 H849.8 M840.1 70.2 V88.8" stroke="#3d9a4c" stroke-width="2"/><rect x="862.3" y="54.6" width="35.6" height="28.5" fill="none" stroke="#3b3a39" stroke-width="1.3"/><rect x="860.5" y="52.8" width="4" height="4" fill="#1f78c1"/><rect x="895.8" y="52.8" width="4" height="4" fill="#1f78c1"/><rect x="860.5" y="81" width="4" height="4" fill="#1f78c1"/><rect x="895.8" y="81" width="4" height="4" fill="#1f78c1"/><path d="M873 77.6 L880 60.5 L887 77.6 M875.3 72 H884.7" fill="none" stroke="#2a86d4" stroke-width="1.4"/><path d="M930.5 86 H920.3 V65.8 H930.3 M930.3 86 V52 H940.8 V86 M940.8 58 H950.2 V86 H940" fill="none" stroke="#3b3a39" stroke-width="1.5"/><path d="M930.5 88.8 L933 82 L950.5 64.5 Q953 62.2 955.2 64.4 Q957.2 66.6 955 69 L937.5 86.4 Z" fill="#fafafa" stroke="#2a86d4" stroke-width="1.5" stroke-linejoin="round"/><path d="M930.5 88.8 L932.8 82.6 L936.8 86.5 Z" fill="#8cc2ee"/><path d="M949.5 65.5 L954 70" stroke="#2a86d4" stroke-width="1.3"/><rect x="1018" y="65.5" width="10.6" height="20.5" fill="#e3e3e3" stroke="#d0d0d0" stroke-width="1.2"/><path d="M1028.6 86 V51.8 H1039 V63" fill="none" stroke="#c8c8c8" stroke-width="1.5"/><rect x="1039.5" y="57.8" width="9" height="5.6" fill="#d2e5f7" stroke="#b9d6f0" stroke-width="1"/><text x="1032" y="84.5" font-family="Liberation Serif" font-style="italic" font-size="23" fill="#b5b5b5">fx</text><rect x="1097.2" y="51.9" width="22.4" height="34" fill="#fff" stroke="#3b3a39" stroke-width="1.6"/><rect x="1100.8" y="55.8" width="15.4" height="5.4" fill="#90c0ee" stroke="#2a78c8" stroke-width="1.1"/><rect x="1100.4" y="64.4" width="3.2" height="3.2" fill="#333"/><rect x="1100.4" y="71.7" width="3.2" height="3.2" fill="#333"/><rect x="1100.4" y="79.30000000000001" width="3.2" height="3.2" fill="#333"/><rect x="1106.7" y="64.4" width="3.2" height="3.2" fill="#333"/><rect x="1106.7" y="71.7" width="3.2" height="3.2" fill="#333"/><rect x="1106.7" y="79.30000000000001" width="3.2" height="3.2" fill="#333"/><rect x="1113.0" y="64.4" width="3.2" height="3.2" fill="#333"/><rect x="1113.0" y="71.7" width="3.2" height="3.2" fill="#333"/><rect x="1113.0" y="79.30000000000001" width="3.2" height="3.2" fill="#333"/><rect x="1158.1" y="51.9" width="22.6" height="34" fill="#fff" stroke="#3b3a39" stroke-width="1.6"/><rect x="1161.6" y="55.8" width="15.6" height="5.4" fill="#c2c2c2" stroke="#9a9a9a" stroke-width="1"/><rect x="1161.4" y="64.4" width="3.2" height="3.2" fill="#333"/><rect x="1161.4" y="71.7" width="3.2" height="3.2" fill="#333"/><rect x="1161.4" y="79.30000000000001" width="3.2" height="3.2" fill="#333"/><rect x="1167.8000000000002" y="64.4" width="3.2" height="3.2" fill="#333"/><rect x="1167.8000000000002" y="71.7" width="3.2" height="3.2" fill="#333"/><rect x="1167.8000000000002" y="79.30000000000001" width="3.2" height="3.2" fill="#333"/><rect x="1174.1000000000001" y="64.4" width="3.2" height="3.2" fill="#333"/><rect x="1174.1000000000001" y="71.7" width="3.2" height="3.2" fill="#333"/><rect x="1174.1000000000001" y="79.30000000000001" width="3.2" height="3.2" fill="#333"/><path d="M1157.5 49.6 H1166 L1161.6 58.3 H1167.3 L1150.5 73.6 L1155.8 62.2 H1150.5 Z" fill="#f9c85c" stroke="#e07a12" stroke-width="1.3" stroke-linejoin="round"/><path d="M1257 51.8 H1244 V86.2 H1269.2 V67" fill="none" stroke="#a9cfe8" stroke-width="1.4"/><path d="M1249 66 L1256 59 L1262.3 65.3 L1255.3 72.3 Z" fill="#fff" stroke="#a9cfe8" stroke-width="1.4"/><path d="M1251.5 66.2 L1256 61.7 M1253 67.7 L1257.5 63.2" stroke="#a9cfe8" stroke-width="1"/><path d="M1258 55.5 L1262 51.5 L1272 61.5 L1268 65.5 Z" fill="#b5d8ee" stroke="#a9cfe8" stroke-width="1.2"/><path d="M1267.5 53 L1271 49.8 L1276.5 55.3 L1273 58.8 Z" fill="#fff" stroke="#a9cfe8" stroke-width="1.3"/><path d="M1338.5 86 H1328 Q1326 86 1326 84 V74.7 Q1326 72.7 1328 72.7 H1336.5 Q1338.5 72.7 1338.5 74.7 Z" fill="none" stroke="#333" stroke-width="1.5"/><path d="M1332.3 72.7 V63.7 Q1332.3 61.7 1334.3 61.7 H1343 Q1345 61.7 1345 63.7 V86 H1338" fill="none" stroke="#333" stroke-width="1.5"/><path d="M1338.5 61.7 V53.7 Q1338.5 51.7 1340.5 51.7 H1348.5 Q1350.6 51.7 1350.6 53.7 V66" fill="none" stroke="#333" stroke-width="1.5"/><path d="M1345 86 H1348" stroke="#333" stroke-width="1.5"/><path d="M1350.8 88.7 V70.5 M1343.5 77.6 L1350.8 70.3 L1358.1 77.6" fill="none" stroke="#1f6fb8" stroke-width="1.6"/><defs><linearGradient id="cpA" x1="0" y1="0" x2="0" y2="1"><stop offset="0" stop-color="#1ab0f5"/><stop offset="0.3" stop-color="#1296d8"/><stop offset="0.6" stop-color="#4cb070"/><stop offset="0.9" stop-color="#f0c800"/><stop offset="1" stop-color="#f0b000"/></linearGradient><linearGradient id="cpB" x1="0.8" y1="0" x2="0.3" y2="1"><stop offset="0" stop-color="#a04ee8"/><stop offset="0.5" stop-color="#f2588a"/><stop offset="1" stop-color="#fba24a"/></linearGradient><linearGradient id="cpC" x1="0" y1="0" x2="1" y2="1"><stop offset="0" stop-color="#0c3fc8"/><stop offset="1" stop-color="#2a7ae8"/></linearGradient><linearGradient id="cpD" x1="0" y1="0" x2="1" y2="1"><stop offset="0" stop-color="#ff7a3a"/><stop offset="1" stop-color="#d8302a"/></linearGradient></defs><path d="M1413 61.2 L1416 53.3 H1419.5 Q1422 53.5 1423 57 L1424.5 61.2 Z" fill="url(#cpC)"/><path d="M1403 52.9 H1417 L1408.5 76 Q1408 77.5 1406 77.5 H1397.5 Q1394.3 77.5 1394.6 74 L1398 57.5 Q1399 53 1403 52.9 Z" fill="url(#cpA)"/><path d="M1418.4 61 H1429 Q1432.5 61.3 1431.6 65 L1428 79.5 Q1426.5 84.4 1422 84.4 H1410.9 Z" fill="url(#cpB)"/><path d="M1403.3 77.3 H1413.3 L1411 84.4 H1407.8 Q1405.3 84.4 1404.5 81 Z" fill="url(#cpD)"/></svg>
</body></html>
